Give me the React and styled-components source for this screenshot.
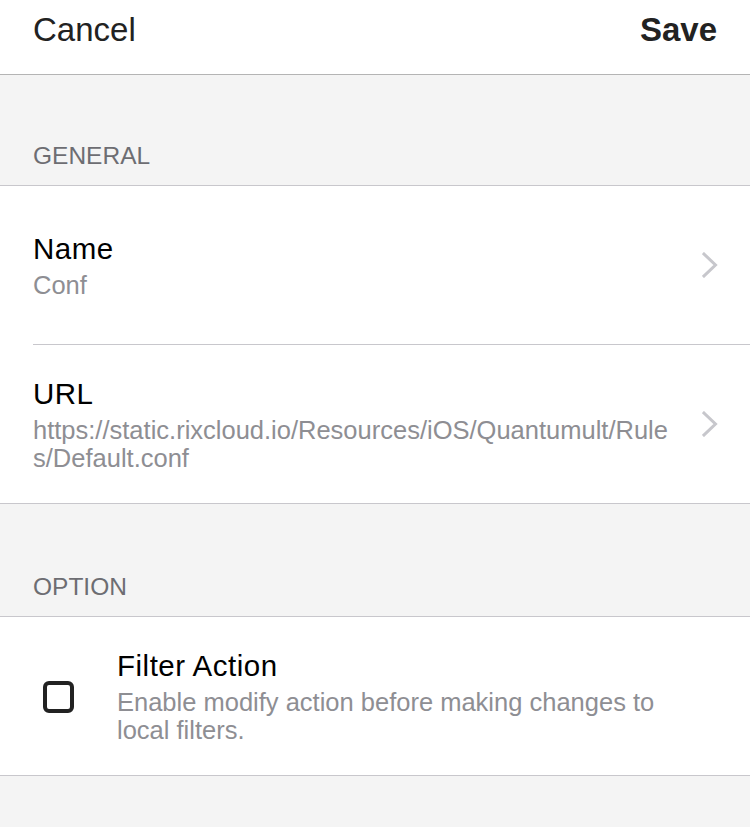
import React from "react";
import styled, { createGlobalStyle } from "styled-components";

const Global = createGlobalStyle`
  html, body { margin: 0; padding: 0; background: #f4f4f4; }
  body { font-family: "Liberation Sans", Arial, sans-serif; -webkit-font-smoothing: antialiased; }
  * { box-sizing: border-box; }
`;

const Page = styled.div`
  width: 750px;
  min-height: 827px;
  background: #f4f4f4;
`;

const NavBar = styled.header`
  height: 75px;
  background: #fff;
  border-bottom: 1px solid #b4b4b4;
  display: flex;
  justify-content: space-between;
  align-items: flex-start;
  padding: 9px 33px 0 33px;
`;

const NavButton = styled.span`
  font-size: 33px;
  line-height: 42px;
  color: #222;
  font-weight: ${(p) => (p.$bold ? 700 : 400)};
`;

const SectionHeader = styled.div`
  height: ${(p) => p.$h}px;
  display: flex;
  align-items: flex-end;
  padding: 0 33px 15px;
  font-size: 24.5px;
  line-height: 28px;
  color: #6d6d72;
  text-transform: uppercase;
`;

const Group = styled.section`
  background: #fff;
  border-top: 1px solid #c8c7cc;
  border-bottom: 1px solid #c8c7cc;
`;

const Row = styled.div`
  padding-left: 33px;
`;

const RowBody = styled.div`
  display: flex;
  align-items: center;
  height: ${(p) => (p.$sep ? 159 : 158)}px;
  border-top: ${(p) => (p.$sep ? "1px solid #c8c7cc" : "none")};
  padding-right: 32px;
  gap: 24px;
`;

const Content = styled.div`
  flex: 1;
  display: flex;
  flex-direction: column;
  gap: 6px;
  min-width: 0;
`;

const Title = styled.div`
  font-size: 29.5px;
  line-height: 36px;
  letter-spacing: 0.5px;
  color: #000;
`;

const Subtitle = styled.div`
  font-size: 25.5px;
  line-height: 28px;
  color: #8e8e93;
  margin-top: -2px;
  word-break: ${(p) => (p.$wrapWords ? "normal" : "break-all")};
  max-width: ${(p) => p.$max || 645}px;
`;

const Chevron = () => (
  <svg width="16" height="26" viewBox="0 0 16 26" fill="none">
    <path d="M2 2 L13.5 13 L2 24" stroke="#c7c7cc" strokeWidth="3" strokeLinecap="square" strokeLinejoin="miter" />
  </svg>
);

const OptionRow = styled.div`
  display: flex;
  align-items: center;
  height: 158px;
  padding: 0 32px 0 43px;
  gap: 43px;
`;

const CheckBox = styled.span`
  width: 31px;
  height: 32px;
  border: 4px solid #222;
  border-radius: 6px;
  flex-shrink: 0;
  margin-top: 2px;
`;

export default function App() {
  return (
    <>
      <Global />
      <Page>
        <NavBar>
          <NavButton>Cancel</NavButton>
          <NavButton $bold>Save</NavButton>
        </NavBar>

        <SectionHeader $h={110}>General</SectionHeader>
        <Group>
          <Row>
            <RowBody>
              <Content>
                <Title>Name</Title>
                <Subtitle>Conf</Subtitle>
              </Content>
              <Chevron />
            </RowBody>
          </Row>
          <Row>
            <RowBody $sep>
              <Content>
                <Title>URL</Title>
                <Subtitle>https://static.rixcloud.io/Resources/iOS/Quantumult/Rules/Default.conf</Subtitle>
              </Content>
              <Chevron />
            </RowBody>
          </Row>
        </Group>

        <SectionHeader $h={112}>Option</SectionHeader>
        <Group>
          <OptionRow>
            <CheckBox />
            <Content>
              <Title>Filter Action</Title>
              <Subtitle $wrapWords $max={560}>Enable modify action before making changes to local filters.</Subtitle>
            </Content>
          </OptionRow>
        </Group>
      </Page>
    </>
  );
}
